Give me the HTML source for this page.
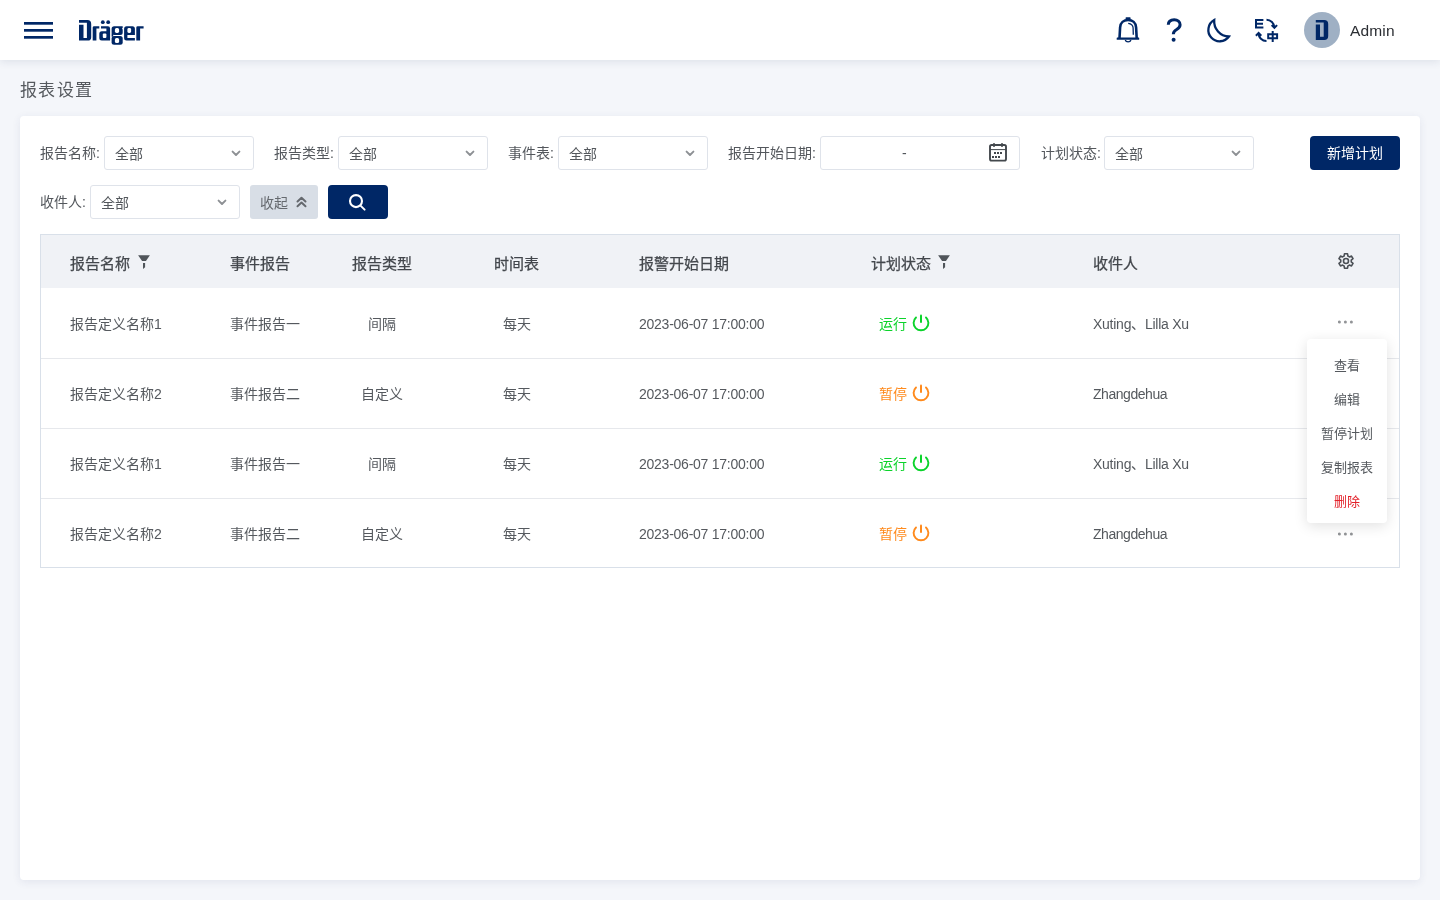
<!DOCTYPE html>
<html lang="zh-CN">
<head>
<meta charset="utf-8">
<title>报表设置</title>
<style>
*{box-sizing:border-box;margin:0;padding:0}
html,body{width:1440px;height:900px;overflow:hidden}
html{background:#f4f6fa}
#root{position:absolute;left:0;top:0;width:1440px;height:900px;will-change:transform}
body{font-family:"Liberation Sans",sans-serif;color:#53575c;position:relative}
.abs{position:absolute}
#hdr{position:absolute;left:0;top:0;width:1440px;height:60px;background:#fff;box-shadow:0 2px 8px rgba(30,50,90,.10);z-index:2}
.navy{fill:#002766}
#title{position:absolute;left:20px;top:78.5px;font-size:17px;letter-spacing:1.25px;line-height:24px;color:#55595e}
#card{position:absolute;left:20px;top:116px;width:1400px;height:764px;background:#fff;border-radius:4px;box-shadow:0 2px 8px rgba(40,60,110,.09)}
.lbl{position:absolute;font-size:14px;line-height:20px;color:#53575c;white-space:nowrap}
.sel{position:absolute;height:34px;border:1px solid #dfe3ea;border-radius:3px;background:#fff}
.sel .v{position:absolute;left:10px;top:7px;font-size:14px;line-height:20px;color:#53575c}
.sel svg{position:absolute;right:12px;top:13px}
.btn{position:absolute;height:34px;border-radius:4px;background:#002766;color:#fff;font-size:14px;line-height:34px;text-align:center}
#tbl{position:absolute;left:40px;top:234px;width:1360px;height:334px;border:1px solid #d9e0e9;background:#fff}
#th{position:absolute;left:0;top:0;width:1358px;height:53px;background:#f0f2f6}
.hc{position:absolute;top:18px;font-size:15px;line-height:22px;color:#43474c;-webkit-text-stroke:0.25px #43474c;white-space:nowrap}
.row{position:absolute;left:0;width:1358px;height:70px}
.sep{position:absolute;left:0;width:1358px;height:1px;background:#e6e8ec}
.c{position:absolute;top:26px;font-size:14px;line-height:20px;color:#55595e;white-space:nowrap}
.lat{letter-spacing:-0.25px}
#menu{position:absolute;left:1307px;top:339px;width:80px;height:184px;background:#fff;border-radius:4px;box-shadow:0 3px 14px rgba(0,0,0,.12);z-index:3}
.mi{position:absolute;left:0;width:80px;text-align:center;font-size:13px;line-height:18px;color:#55595e}
.dots{position:absolute;width:16px;height:4px}
</style>
</head>
<body>
<div id="root">
<div id="hdr">
  <!-- header graphics -->
  <svg class="abs" style="left:0;top:0" width="1440" height="60" viewBox="0 0 1440 60">
   <g fill="#002766">
    <!-- Drager logo -->
    <path d="M79 20.1H87.4Q91.2 20.1 91.2 24V37.2Q91.2 40.6 87.8 40.6H79V24.8H83.5V38.1H86.9V22.8H79Z"/>
    <path d="M92.7 27.6Q92.7 26.2 94.1 26.2H99.3V28.6H96.4V40.6H92.7Z"/>
    <path d="M101 26.2H107.9Q110.1 26.2 110.1 28.4V40.6H101.8Q99.3 40.6 99.3 38.1V33.7Q99.3 31.2 101.8 31.2H106.4V28.6H101Z"/>
    <circle cx="102.8" cy="22.2" r="1.9"/><circle cx="108.2" cy="22.2" r="1.9"/>
    <path d="M114.1 26.2H122.7V28.1H121.9Q122.7 28.9 122.7 30.2V32.5Q122.7 35 120.2 35H114.1Q111.6 35 111.6 32.5V28.7Q111.6 26.2 114.1 26.2Z"/>
    <path d="M114.1 36.1H120.2Q122.7 36.1 122.7 38.6V42.2Q122.7 44.7 120.2 44.7H114.1Q111.6 44.7 111.6 42.2V38.6Q111.6 36.1 114.1 36.1Z"/>
    <rect x="111.6" y="33.5" width="1.6" height="3.2"/>
    <path d="M126.6 26.2H132.4Q134.9 26.2 134.9 28.7V35H127.4V38.1H134.9V40.6H126.6Q124.1 40.6 124.1 38.1V28.7Q124.1 26.2 126.6 26.2Z"/>
    <path d="M136.3 27.6Q136.3 26.2 137.7 26.2H143.6V28.6H140.1V40.6H136.3Z"/>
   </g>
   <g fill="#fff">
    <rect x="102.8" y="33.6" width="3.6" height="4.5" rx="1"/>
    <rect x="114.9" y="28.1" width="4.2" height="4.8" rx="1.6"/>
    <rect x="114.9" y="38.1" width="4.2" height="4.9" rx="1.6"/>
    <rect x="127.4" y="28.1" width="3.7" height="4.8" rx="1.4"/>
   </g>
   <g fill="#002766">
    <!-- avatar -->
   </g>
   <rect x="24" y="22" width="29" height="2.7" fill="#002766"/>
   <rect x="24" y="29" width="29" height="2.7" fill="#002766"/>
   <rect x="24" y="36" width="29" height="2.7" fill="#002766"/>
   <!-- bell -->
   <g fill="none" stroke="#002766">
    <path stroke-width="2.6" d="M1119.5 38.2L1120.1 27.5C1120.3 22.8 1123.8 20 1128.1 20C1132.4 20 1135.9 22.8 1136.1 27.5L1136.7 38.2"/>
    <path stroke-width="1.3" d="M1128.2 23.3C1131.1 23.7 1133 25.3 1133.1 27.8L1133.3 34.8"/>
    <path stroke-width="1.2" d="M1125.2 40A3 2.4 0 0 0 1131 40"/>
    <path stroke-width="3" d="M1168.3 24.8C1168.4 21.4 1170.9 19.7 1174.2 19.7C1177.6 19.7 1180.1 21.8 1180.1 24.7C1180.1 27.6 1178.1 28.6 1176.2 29.8C1174.2 31 1173.4 32.2 1173.3 34.2"/>
    <path stroke-width="2.3" stroke-linejoin="miter" d="M1214.2 20.1A11.3 11.3 0 1 0 1228.9 36.5A15.23 15.23 0 0 1 1214.2 20.1Z"/>
    <path stroke-width="2" d="M1255 20H1263.4M1256 20V27.4M1255 23.7H1263M1255 27.4H1263.4"/>
    <path stroke-width="2" d="M1266.5 19.8A7.8 7.8 0 0 1 1274.3 27.4M1271.6 25.1L1274.4 27.8L1277.1 25.1"/>
    <path stroke-width="2" d="M1266.5 41A7.8 7.8 0 0 1 1258.6 33.2M1255.9 35.7L1258.6 33L1261.3 35.7"/>
    <path stroke-width="2" d="M1268.2 34.3H1277.1V38.2H1268.2ZM1272.7 31.1V41.9"/>
   </g>
   <g fill="#002766">
    <rect x="1125.6" y="17.3" width="5" height="2.2" rx=".6"/>
    <rect x="1116.7" y="37.5" width="22.5" height="2.3" rx=".4"/>
    <circle cx="1173.6" cy="39.7" r="2"/>
   </g>
   <circle cx="1322" cy="30" r="18" fill="#9fb0c4"/>
   <path fill="#002766" d="M1315.8 20H1324.2Q1328.2 20 1328.2 24V36Q1328.2 40 1324.2 40H1315.8V24.4H1320V36.7H1323.7V22.5H1315.8Z"/>
  </svg>
  <div class="abs" style="left:1350px;top:20px;font-size:15.5px;line-height:22px;color:#2b2e33;letter-spacing:0.15px">Admin</div>
</div>

<div id="title">报表设置</div>
<div id="card"></div>

<!-- filters row 1 -->
<div class="lbl" style="left:40px;top:143px">报告名称:</div>
<div class="sel" style="left:104px;top:136px;width:150px"><span class="v">全部</span><svg width="10" height="6" viewBox="0 0 10 6"><path d="M1.6 1.6L5 5L8.4 1.6" fill="none" stroke="#8d9094" stroke-width="1.9" stroke-linecap="round" stroke-linejoin="round"/></svg></div>
<div class="lbl" style="left:274px;top:143px">报告类型:</div>
<div class="sel" style="left:338px;top:136px;width:150px"><span class="v">全部</span><svg width="10" height="6" viewBox="0 0 10 6"><path d="M1.6 1.6L5 5L8.4 1.6" fill="none" stroke="#8d9094" stroke-width="1.9" stroke-linecap="round" stroke-linejoin="round"/></svg></div>
<div class="lbl" style="left:508px;top:143px">事件表:</div>
<div class="sel" style="left:558px;top:136px;width:150px"><span class="v">全部</span><svg width="10" height="6" viewBox="0 0 10 6"><path d="M1.6 1.6L5 5L8.4 1.6" fill="none" stroke="#8d9094" stroke-width="1.9" stroke-linecap="round" stroke-linejoin="round"/></svg></div>
<div class="lbl" style="left:728px;top:143px">报告开始日期:</div>
<div class="sel" style="left:820px;top:136px;width:200px"><span class="v" style="left:81px;top:6px">-</span>
<svg style="position:absolute;left:167px;top:5px" width="20" height="20" viewBox="0 0 20 20"><rect x="2" y="3" width="16" height="15.6" rx="1.6" fill="none" stroke="#43484d" stroke-width="1.9"/><line x1="2" y1="7.6" x2="18" y2="7.6" stroke="#43484d" stroke-width="1"/><rect x="5" y="1" width="2" height="4" rx="1" fill="#43484d"/><rect x="13" y="1" width="2" height="4" rx="1" fill="#43484d"/><rect x="6" y="10" width="2" height="2" fill="#43484d"/><rect x="9" y="10" width="2" height="2" fill="#43484d"/><rect x="12" y="10" width="2" height="2" fill="#43484d"/><rect x="4" y="14" width="2" height="2" fill="#43484d"/><rect x="7" y="14" width="2" height="2" fill="#43484d"/><rect x="10" y="14" width="2" height="2" fill="#43484d"/></svg></div>
<div class="lbl" style="left:1041px;top:143px">计划状态:</div>
<div class="sel" style="left:1104px;top:136px;width:150px"><span class="v">全部</span><svg width="10" height="6" viewBox="0 0 10 6"><path d="M1.6 1.6L5 5L8.4 1.6" fill="none" stroke="#8d9094" stroke-width="1.9" stroke-linecap="round" stroke-linejoin="round"/></svg></div>
<div class="btn" style="left:1310px;top:136px;width:90px">新增计划</div>
<!-- row 2 -->
<div class="lbl" style="left:40px;top:192px">收件人:</div>
<div class="sel" style="left:90px;top:185px;width:150px"><span class="v">全部</span><svg width="10" height="6" viewBox="0 0 10 6"><path d="M1.6 1.6L5 5L8.4 1.6" fill="none" stroke="#8d9094" stroke-width="1.9" stroke-linecap="round" stroke-linejoin="round"/></svg></div>
<div class="btn" style="left:250px;top:185px;width:68px;background:#d8dee6;color:#65696e;border-radius:3px"><span class="abs" style="left:10px;top:8px;line-height:20px">收起</span>
<svg class="abs" style="left:46px;top:11px" width="11" height="12" viewBox="0 0 11 12"><path d="M1.5 5.5L5.5 1.8L9.5 5.5M1.5 10.2L5.5 6.5L9.5 10.2" fill="none" stroke="#65696e" stroke-width="2" stroke-linecap="round" stroke-linejoin="round"/></svg></div>
<div class="btn" style="left:328px;top:185px;width:60px"><svg class="abs" style="left:20px;top:8px" width="20" height="20" viewBox="0 0 20 20"><circle cx="8" cy="8.1" r="6" fill="none" stroke="#fff" stroke-width="2.1"/><path d="M12.5 12.6L16.6 16.6" stroke="#fff" stroke-width="2" stroke-linecap="round"/></svg></div>

<div id="tbl">
  <div id="th">
    <div class="hc" style="left:29px">报告名称</div>
    <svg class="abs" style="left:97px;top:20px" width="13" height="15" viewBox="0 0 13 15"><path d="M0.1 0.2H11.9L7.9 5.9H4.1Z" fill="#50555a"/><path d="M5 7.9H7.1V12.3L5 13.9Z" fill="#50555a"/></svg>
    <div class="hc" style="left:189px">事件报告</div>
    <div class="hc" style="left:311px">报告类型</div>
    <div class="hc" style="left:453px">时间表</div>
    <div class="hc" style="left:598px">报警开始日期</div>
    <div class="hc" style="left:830px">计划状态</div>
    <svg class="abs" style="left:897px;top:20px" width="13" height="15" viewBox="0 0 13 15"><path d="M0.1 0.2H11.9L7.9 5.9H4.1Z" fill="#50555a"/><path d="M5 7.9H7.1V12.3L5 13.9Z" fill="#50555a"/></svg>
    <div class="hc" style="left:1052px">收件人</div>
    <svg class="abs" style="left:1295px;top:16px" width="20" height="20" viewBox="0 0 20 20"><path fill="none" stroke="#4a4f55" stroke-width="1.6" stroke-linejoin="round" d="M8.10 5.05L8.46 2.76L11.54 2.76L11.90 5.05A5.3 5.3 0 0 1 13.34 5.88L15.50 5.05L17.04 7.71L15.23 9.17A5.3 5.3 0 0 1 15.23 10.83L17.04 12.29L15.50 14.95L13.34 14.12A5.3 5.3 0 0 1 11.90 14.95L11.54 17.24L8.46 17.24L8.10 14.95A5.3 5.3 0 0 1 6.66 14.12L4.50 14.95L2.96 12.29L4.77 10.83A5.3 5.3 0 0 1 4.77 9.17L2.96 7.71L4.50 5.05L6.66 5.88A5.3 5.3 0 0 1 8.10 5.05Z"/><circle cx="10" cy="10" r="2.5" fill="none" stroke="#4a4f55" stroke-width="1.6"/></svg>
  </div>
  <div class="row" style="top:53px">
    <div class="c" style="left:29px">报告定义名称1</div>
    <div class="c" style="left:189px">事件报告一</div>
    <div class="c" style="left:311px;width:60px;text-align:center">间隔</div>
    <div class="c" style="left:446px;width:60px;text-align:center">每天</div>
    <div class="c lat" style="left:598px">2023-06-07 17:00:00</div>
    <div class="c" style="left:838px;color:#0bd32b">运行</div>
    <svg class="abs" style="left:871px;top:26px" width="18" height="18" viewBox="0 0 18 18"><path d="M4 3.45A7.4 7.4 0 1 0 14 3.45" fill="none" stroke="#0bd32b" stroke-width="1.9" stroke-linecap="round"/><path d="M9 1.6V8" stroke="#0bd32b" stroke-width="2" stroke-linecap="round"/></svg>
    <div class="c lat" style="left:1052px">Xuting、Lilla Xu</div>
    <svg class="abs" style="left:1297px;top:31.5px" width="16" height="4" viewBox="0 0 16 4"><circle cx="1.4" cy="2" r="1.5" fill="#929497"/><circle cx="7.4" cy="2" r="1.5" fill="#929497"/><circle cx="13.4" cy="2" r="1.5" fill="#929497"/></svg>
  </div>
  <div class="sep" style="top:123px"></div>
  <div class="row" style="top:123px">
    <div class="c" style="left:29px">报告定义名称2</div>
    <div class="c" style="left:189px">事件报告二</div>
    <div class="c" style="left:311px;width:60px;text-align:center">自定义</div>
    <div class="c" style="left:446px;width:60px;text-align:center">每天</div>
    <div class="c lat" style="left:598px">2023-06-07 17:00:00</div>
    <div class="c" style="left:838px;color:#ff8a1c">暂停</div>
    <svg class="abs" style="left:871px;top:26px" width="18" height="18" viewBox="0 0 18 18"><path d="M4 3.45A7.4 7.4 0 1 0 14 3.45" fill="none" stroke="#ff8a1c" stroke-width="1.9" stroke-linecap="round"/><path d="M9 1.6V8" stroke="#ff8a1c" stroke-width="2" stroke-linecap="round"/></svg>
    <div class="c" style="left:1052px;letter-spacing:-0.45px">Zhangdehua</div>
    <svg class="abs" style="left:1297px;top:31.5px" width="16" height="4" viewBox="0 0 16 4"><circle cx="1.4" cy="2" r="1.5" fill="#929497"/><circle cx="7.4" cy="2" r="1.5" fill="#929497"/><circle cx="13.4" cy="2" r="1.5" fill="#929497"/></svg>
  </div>
  <div class="sep" style="top:193px"></div>
  <div class="row" style="top:193px">
    <div class="c" style="left:29px">报告定义名称1</div>
    <div class="c" style="left:189px">事件报告一</div>
    <div class="c" style="left:311px;width:60px;text-align:center">间隔</div>
    <div class="c" style="left:446px;width:60px;text-align:center">每天</div>
    <div class="c lat" style="left:598px">2023-06-07 17:00:00</div>
    <div class="c" style="left:838px;color:#0bd32b">运行</div>
    <svg class="abs" style="left:871px;top:26px" width="18" height="18" viewBox="0 0 18 18"><path d="M4 3.45A7.4 7.4 0 1 0 14 3.45" fill="none" stroke="#0bd32b" stroke-width="1.9" stroke-linecap="round"/><path d="M9 1.6V8" stroke="#0bd32b" stroke-width="2" stroke-linecap="round"/></svg>
    <div class="c lat" style="left:1052px">Xuting、Lilla Xu</div>
    <svg class="abs" style="left:1297px;top:31.5px" width="16" height="4" viewBox="0 0 16 4"><circle cx="1.4" cy="2" r="1.5" fill="#929497"/><circle cx="7.4" cy="2" r="1.5" fill="#929497"/><circle cx="13.4" cy="2" r="1.5" fill="#929497"/></svg>
  </div>
  <div class="sep" style="top:263px"></div>
  <div class="row" style="top:263px">
    <div class="c" style="left:29px">报告定义名称2</div>
    <div class="c" style="left:189px">事件报告二</div>
    <div class="c" style="left:311px;width:60px;text-align:center">自定义</div>
    <div class="c" style="left:446px;width:60px;text-align:center">每天</div>
    <div class="c lat" style="left:598px">2023-06-07 17:00:00</div>
    <div class="c" style="left:838px;color:#ff8a1c">暂停</div>
    <svg class="abs" style="left:871px;top:26px" width="18" height="18" viewBox="0 0 18 18"><path d="M4 3.45A7.4 7.4 0 1 0 14 3.45" fill="none" stroke="#ff8a1c" stroke-width="1.9" stroke-linecap="round"/><path d="M9 1.6V8" stroke="#ff8a1c" stroke-width="2" stroke-linecap="round"/></svg>
    <div class="c" style="left:1052px;letter-spacing:-0.45px">Zhangdehua</div>
    <svg class="abs" style="left:1297px;top:33.5px" width="16" height="4" viewBox="0 0 16 4"><circle cx="1.4" cy="2" r="1.5" fill="#929497"/><circle cx="7.4" cy="2" r="1.5" fill="#929497"/><circle cx="13.4" cy="2" r="1.5" fill="#929497"/></svg>
  </div>
</div>

<div id="menu">
  <div class="mi" style="top:18px">查看</div>
  <div class="mi" style="top:52px">编辑</div>
  <div class="mi" style="top:86px">暂停计划</div>
  <div class="mi" style="top:120px">复制报表</div>
  <div class="mi" style="top:154px;color:#e3222b">删除</div>
</div>
</div>
</body>
</html>
